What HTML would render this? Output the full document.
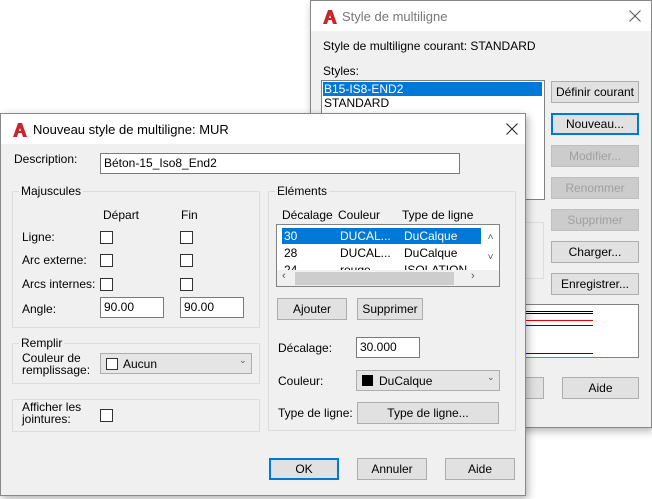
<!DOCTYPE html><html><head><meta charset="utf-8"><style>
*{box-sizing:border-box;margin:0;padding:0}
body{width:652px;height:499px;background:#fff;position:relative;overflow:hidden;font-family:"Liberation Sans",sans-serif;font-size:12px;color:#000}
.a{position:absolute}
.dlg{position:absolute;background:#f0f0f0;border:1px solid #888;box-shadow:2px 3px 8px rgba(0,0,0,.3)}
.tb{position:absolute;left:0;right:0;top:0;height:30px;background:#fff}
.btn{position:absolute;height:22px;background:#e1e1e1;border:1px solid #adadad;text-align:center;line-height:20px}
.dis{color:#a0a0a0;background:#ccc;border-color:#bfbfbf}
.inp{position:absolute;height:21px;background:#fff;border:1px solid #7a7a7a;padding-left:3px;line-height:19px}
.cb{position:absolute;width:13px;height:13px;border:1px solid #333;background:#fff}
.grp{position:absolute;border:1px solid #dcdcdc}
.gl{position:absolute;background:#f0f0f0;padding:0 2px;top:-8px;left:6px}
</style></head><body>
<!-- back dialog -->
<div class="dlg" style="left:310px;top:0;width:342px;height:428px">
<div class="tb"></div>
<svg class="a" style="left:11px;top:8px" width="16" height="16" viewBox="0 0 16 16"><path d="M1 15 L6 1 H10 L15 15 H11 L8 6 L5 15Z" fill="#c8262c"/><rect x="5" y="9" width="6" height="2" fill="#c8262c"/></svg>
<div class="a" style="left:31px;top:8px;color:#777;font-size:13px">Style de multiligne</div>
<svg class="a" style="left:318px;top:9px" width="12" height="12"><path d="M0.5 0.5L11.5 11.5M11.5 0.5L0.5 11.5" stroke="#555" stroke-width="1"/></svg>
<div class="a" style="left:12px;top:38px">Style de multiligne courant: STANDARD</div>
<div class="a" style="left:12px;top:63px">Styles:</div>
<div class="a" style="left:10px;top:79px;width:224px;height:120px;background:#fff;border:1px solid #828282"></div>
<div class="a" style="left:12px;top:81px;width:219px;height:14px;background:#0078d7;color:#fff;padding-left:1px;line-height:14px">B15-IS8-END2</div>
<div class="a" style="left:13px;top:95px">STANDARD</div>
<div class="btn" style="left:240px;top:80px;width:88px">Définir courant</div>
<div class="btn" style="left:240px;top:112px;width:88px;border:2px solid #0078d7;line-height:18px">Nouveau...</div>
<div class="btn dis" style="left:240px;top:144px;width:88px">Modifier...</div>
<div class="btn dis" style="left:240px;top:176px;width:88px">Renommer</div>
<div class="btn dis" style="left:240px;top:208px;width:88px">Supprimer</div>
<div class="btn" style="left:240px;top:240px;width:88px">Charger...</div>
<div class="btn" style="left:240px;top:272px;width:88px">Enregistrer...</div>
<div class="grp" style="left:210px;top:221px;width:23px;height:57px"></div>
<div class="a" style="left:213px;top:303px;width:115px;height:54px;background:#fff;border:1px solid #828282"></div>
<div class="a" style="left:214px;top:310px;width:68px;height:1px;background:#000"></div>
<div class="a" style="left:214px;top:312px;width:68px;height:1px;background:#000"></div>
<div class="a" style="left:214px;top:319px;width:68px;height:1px;background:#e00"></div>
<div class="a" style="left:214px;top:324px;width:68px;height:1px;background:#00f"></div>
<div class="a" style="left:214px;top:352px;width:68px;height:1px;background:#00f"></div>
<div class="btn" style="left:200px;top:376px;width:33px"></div>
<div class="btn" style="left:251px;top:376px;width:77px">Aide</div>
</div>
<!-- front dialog -->
<div class="dlg" style="left:0;top:113px;width:526px;height:383px">
<div class="tb"></div>
<svg class="a" style="left:11px;top:8px" width="16" height="16" viewBox="0 0 16 16"><path d="M1 15 L6 1 H10 L15 15 H11 L8 6 L5 15Z" fill="#c8262c"/><rect x="5" y="9" width="6" height="2" fill="#c8262c"/></svg>
<div class="a" style="left:32px;top:8px;font-size:13px">Nouveau style de multiligne: MUR</div>
<svg class="a" style="left:505px;top:9px" width="12" height="12"><path d="M0.5 0.5L11.5 11.5M11.5 0.5L0.5 11.5" stroke="#222" stroke-width="1"/></svg>
<div class="a" style="left:13px;top:38px">Description:</div>
<div class="inp" style="left:99px;top:39px;width:360px">Béton-15_Iso8_End2</div>
<div class="grp" style="left:11px;top:77px;width:248px;height:137px"><div class="gl">Majuscules</div></div>
<div class="a" style="left:102px;top:94px">Départ</div>
<div class="a" style="left:180px;top:94px">Fin</div>
<div class="a" style="left:21px;top:116px">Ligne:</div>
<div class="a" style="left:21px;top:139px">Arc externe:</div>
<div class="a" style="left:21px;top:163px">Arcs internes:</div>
<div class="a" style="left:21px;top:188px">Angle:</div>
<div class="cb" style="left:99px;top:117px"></div><div class="cb" style="left:179px;top:117px"></div>
<div class="cb" style="left:99px;top:140px"></div><div class="cb" style="left:179px;top:140px"></div>
<div class="cb" style="left:99px;top:164px"></div><div class="cb" style="left:179px;top:164px"></div>
<div class="inp" style="left:99px;top:183px;width:64px">90.00</div>
<div class="inp" style="left:179px;top:183px;width:64px">90.00</div>
<div class="grp" style="left:11px;top:229px;width:248px;height:41px"><div class="gl">Remplir</div></div>
<div class="a" style="left:21px;top:238px;line-height:12px">Couleur de<br>remplissage:</div>
<div class="a" style="left:99px;top:239px;width:152px;height:21px;background:#e5e5e5;border:1px solid #adadad"></div>
<div class="cb" style="left:105px;top:244px;width:12px;height:12px"></div>
<div class="a" style="left:122px;top:243px">Aucun</div>
<div class="a" style="left:238px;top:241px;font-size:9px;color:#555">&#8964;</div>
<div class="grp" style="left:11px;top:285px;width:248px;height:33px"></div>
<div class="a" style="left:21px;top:287px;line-height:12px">Afficher les<br>jointures:</div>
<div class="cb" style="left:99px;top:295px"></div>
<div class="grp" style="left:267px;top:77px;width:248px;height:240px"><div class="gl">Eléments</div></div>
<div class="a" style="left:281px;top:94px">Décalage</div>
<div class="a" style="left:337px;top:94px">Couleur</div>
<div class="a" style="left:401px;top:94px">Type de ligne</div>
<div class="a" style="left:275px;top:110px;width:224px;height:63px;background:#fff;border:1px solid #828282;overflow:hidden">
<div class="a" style="left:5px;top:3px;width:199px;height:16px;background:#0078d7"></div>
<div class="a" style="left:7px;top:4px;color:#fff">30</div><div class="a" style="left:63px;top:4px;color:#fff">DUCAL...</div><div class="a" style="left:127px;top:4px;color:#fff">DuCalque</div>
<div class="a" style="left:7px;top:21px">28</div><div class="a" style="left:63px;top:21px">DUCAL...</div><div class="a" style="left:127px;top:21px">DuCalque</div>
<div class="a" style="left:7px;top:38px">24</div><div class="a" style="left:63px;top:38px">rouge</div><div class="a" style="left:127px;top:38px">ISOLATION</div>
<div class="a" style="left:0;top:45px;width:222px;height:17px;background:#f0f0f0"></div>
<div class="a" style="left:18px;top:47px;width:159px;height:13px;background:#cdcdcd"></div>
<div class="a" style="left:5px;top:45px;font-size:11px;color:#555">&lsaquo;</div>
<div class="a" style="left:194px;top:45px;font-size:11px;color:#555">&rsaquo;</div>
<div class="a" style="left:205px;top:3px;width:17px;height:42px;background:#fff;font-size:10px;color:#555;text-align:center;line-height:20px">&#708;<br>&#709;</div>
</div>
<div class="btn" style="left:276px;top:184px;width:70px">Ajouter</div>
<div class="btn" style="left:356px;top:184px;width:66px">Supprimer</div>
<div class="a" style="left:277px;top:227px">Décalage:</div>
<div class="inp" style="left:355px;top:223px;width:64px">30.000</div>
<div class="a" style="left:277px;top:260px">Couleur:</div>
<div class="a" style="left:355px;top:256px;width:144px;height:21px;background:#e5e5e5;border:1px solid #adadad"></div>
<div class="a" style="left:361px;top:261px;width:11px;height:11px;background:#000"></div>
<div class="a" style="left:378px;top:260px">DuCalque</div>
<div class="a" style="left:486px;top:258px;font-size:9px;color:#555">&#8964;</div>
<div class="a" style="left:277px;top:292px">Type de ligne:</div>
<div class="btn" style="left:356px;top:288px;width:142px">Type de ligne...</div>
<div class="btn" style="left:268px;top:344px;width:70px;border:2px solid #0078d7;line-height:18px">OK</div>
<div class="btn" style="left:356px;top:344px;width:70px">Annuler</div>
<div class="btn" style="left:444px;top:344px;width:70px">Aide</div>
</div>
</body></html>
